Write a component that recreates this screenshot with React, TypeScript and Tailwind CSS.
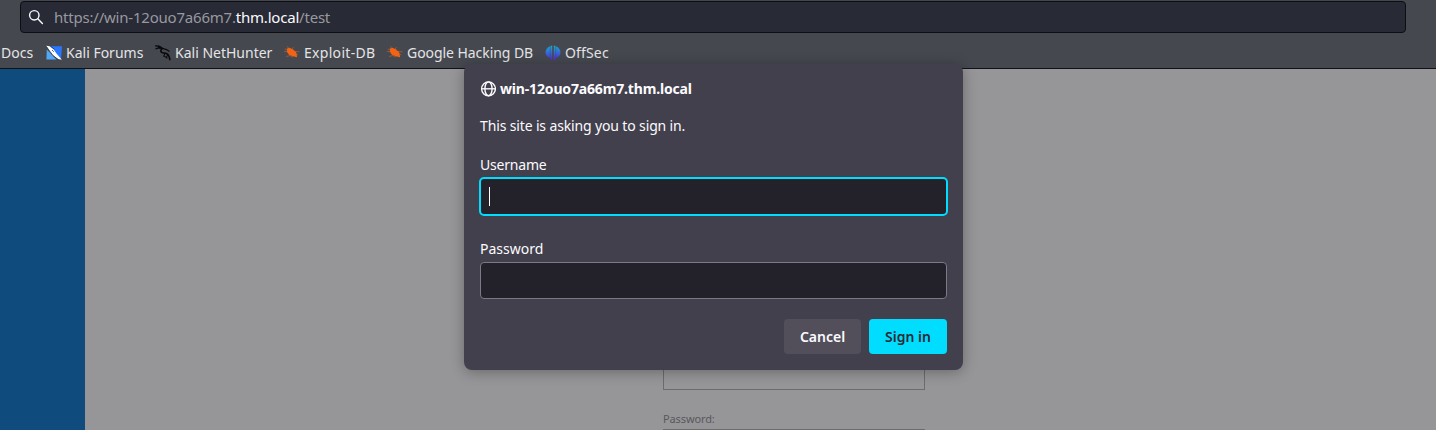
import React from "react";

function SearchIcon() {
  return (
    <svg width="16" height="16" viewBox="0 0 16 16" fill="none" stroke="#fbfbfe" strokeWidth="1.4" strokeLinecap="round">
      <circle cx="6.3" cy="6.3" r="4.7" />
      <path d="M9.8 9.8 14.4 14.4" />
    </svg>
  );
}

function GlobeIcon() {
  return (
    <svg width="16" height="16" viewBox="0 0 16 16" fill="none" stroke="#fbfbfe" strokeWidth="1.35" className="shrink-0">
      <circle cx="8.5" cy="7.8" r="6.9" />
      <ellipse cx="8.5" cy="7.8" rx="3.6" ry="6.9" />
      <path d="M1.7 7.8h13.6" />
    </svg>
  );
}

function ForumsIcon() {
  return (
    <svg width="16" height="16" viewBox="0 0 16 16" className="shrink-0">
      <path d="M3 1.2H16L15 14H11Z" fill="#2777ff" />
      <path d="M.8 4.5 10.5 14.6H.4Z" fill="#51a8f5" />
      <path d="M.3.8 3.5 1.2 7.5 4.2 10.5 8.6 15.8 14.8 12.2 14 6.8 10.3 3.6 6.2Z" fill="#fff" />
      <path d="M.3 1.5 3.8 6.2 7 10.6 12.4 14.8M4.6 1.2 8.4 4.2M6 5 7.8 6.8" stroke="#303640" strokeWidth=".75" fill="none" />
    </svg>
  );
}

function NetHunterIcon() {
  return (
    <svg width="16" height="16" viewBox="0 0 16 16" fill="none" stroke="#08090b" className="shrink-0">
      <path d="M0 .8 4 1.2 6.5 2.5M.5 3.8 3.5 2.8 6 3.2" strokeWidth="1.3" />
      <path d="M3 1.5 7.5 3.4C5.2 5 5.2 7.4 7.7 7.7L11.5 8.4C13.7 9.4 14.6 11.5 14.8 15.2" strokeWidth="1.6" />
      <path d="M7 3.2 11.5 4.6 14.5 6.5M9.8 8.5 8.8 11.2 10.5 11.8M12.8 10.2 11 12.5 12.5 13.3" strokeWidth="1.1" />
    </svg>
  );
}

function BugIcon() {
  return (
    <svg width="16" height="16" viewBox="0 0 16 16" className="shrink-0">
      <path d="M3 3.5 5.5 2.8 9 4.5 12 7 12.8 9.8 13 12.2 8.8 11.3 5 9.8 2.8 6.7Z" fill="#f26414" />
      <path d="M0 6.5 3.5 6.7M2 11.5 6 10.5 9 12.2M4.5 3.3 3.5 1.3M8 4 9.5 2.2M11 6.5 15.5 6.8M12 8.5 14.2 10M.8 4 3.8 4.8" stroke="#c9602f" strokeWidth=".65" fill="none" />
    </svg>
  );
}

function OffSecIcon() {
  return (
    <svg width="16" height="16" viewBox="0 0 16 16" className="shrink-0">
      <defs>
        <linearGradient id="offsec" x1="0" y1="0" x2="0" y2="16" gradientUnits="userSpaceOnUse">
          <stop offset="0" stopColor="#16b0c4" />
          <stop offset=".5" stopColor="#3568dc" />
          <stop offset="1" stopColor="#5a23cf" />
        </linearGradient>
      </defs>
      <g fill="url(#offsec)">
        <path d="M4.9 1.2V12.8C-1 11.5-1 4 4.9 1.2Z" />
        <path d="M5.4 1 7.2.5V15.7L5.4 14.2Z" />
        <path d="M8.8.5 10.6 1V14.2L8.8 15.7Z" />
        <path d="M11.1 1.2C17 4 17 11.5 11.1 12.8Z" />
      </g>
    </svg>
  );
}

const bookmarks = [
  { label: "Kali Forums", icon: <ForumsIcon />, width: "w-[109px]", tracking: "" },
  { label: "Kali NetHunter", icon: <NetHunterIcon />, width: "w-[129px]", tracking: "" },
  { label: "Exploit-DB", icon: <BugIcon />, width: "w-[103px]", tracking: "tracking-[0.3px]" },
  { label: "Google Hacking DB", icon: <BugIcon />, width: "w-[158px]", tracking: "tracking-[-0.06px]" },
  { label: "OffSec", icon: <OffSecIcon />, width: "w-[80px]", tracking: "tracking-[0.15px]" },
];

export default function App() {
  return (
    <div className="relative flex h-[430px] w-[1436px] flex-col overflow-hidden bg-[#969698] font-['Noto_Sans',sans-serif] text-[14px] text-[#fbfbfe]">
      <header className="flex h-[69px] shrink-0 flex-col border-b border-[#111216] bg-[#45484f]">
        <div className="ml-5 mt-px flex h-8 w-[1386px] shrink-0 items-center gap-[10px] rounded-[4px] border border-[#0d0e13] bg-[#282a36] pl-[7px]">
          <SearchIcon />
          <div className="whitespace-nowrap text-[15px] leading-5 tracking-[-0.21px] text-[#98999f]">
            https://win-12ouo7a66m7.<span className="text-[#fbfbfe]">thm.local</span>/test
          </div>
        </div>
        <nav className="mt-[10px] flex h-5 items-center whitespace-nowrap leading-5 text-[#e4e4e6]">
          <span className="w-[46px] pl-px">Docs</span>
          {bookmarks.map((b) => (
            <a key={b.label} className={`flex shrink-0 items-center gap-1 ${b.width}`}>
              {b.icon}
              <span className={b.tracking}>{b.label}</span>
            </a>
          ))}
        </nav>
      </header>
      <main className="flex flex-1">
        <aside className="w-[85px] bg-[#0f4b7c]" />
        <section className="ml-[578px] flex w-[262px] flex-col pt-[281px]">
          <div className="h-10 shrink-0 border border-[#6b6b70]" />
          <label className="mt-5 h-[19px] shrink-0 text-[11px] leading-[18px] tracking-[-0.12px] text-[#58585b]">Password:</label>
          <div className="h-10 shrink-0 border border-[#6b6b70]" />
        </section>
      </main>
      <div className="absolute left-[464px] top-[64px] flex h-[306px] w-[499px] flex-col rounded-lg bg-[#43404d] px-4 pt-[15px] shadow-[0_2px_14px_rgba(0,0,0,0.3)]">
        <div className="flex h-5 items-center gap-1 font-bold leading-5 tracking-[-0.16px]">
          <GlobeIcon />
          <span>win-12ouo7a66m7.thm.local</span>
        </div>
        <p className="mt-[17px] h-5 leading-5 tracking-[-0.14px]">This site is asking you to sign in.</p>
        <label className="mt-[19px] h-5 leading-5 tracking-[-0.2px]">Username</label>
        <div className="-mx-px mt-[2px] flex h-[39px] items-center rounded-[5px] border-2 border-[#00ddff] bg-[#23222b] pl-2">
          <div className="h-[19px] w-px bg-white" />
        </div>
        <label className="mt-[23px] h-5 leading-5">Password</label>
        <div className="mt-[3px] h-[37px] rounded-[4px] border border-[#7c7a86] bg-[#23222b]" />
        <div className="mt-5 flex justify-end gap-2 font-semibold">
          <button className="h-[35px] w-[77px] rounded-[4px] bg-[#524f5b]">Cancel</button>
          <button className="h-[35px] w-[78px] rounded-[4px] bg-[#00ddff] text-[#2b2a33]">Sign in</button>
        </div>
      </div>
    </div>
  );
}
